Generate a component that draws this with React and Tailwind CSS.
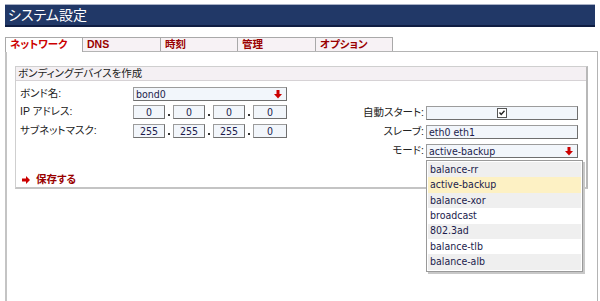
export default function App() {
  const box =
    "h-[14px] border border-[#9c9c9c] border-r-[#6f6f6f] border-b-[#6f6f6f] bg-[#f2f6fb] text-[#1c1c4c] leading-[12px] text-[10.5px] font-['DejaVu_Sans_Condensed','Liberation_Sans',sans-serif]";
  const DownArrow = () => (
    <svg width="8" height="9" viewBox="0 0 8 9" className="shrink-0">
      <rect x="2.5" y="0" width="3" height="4.5" fill="#cc0000" />
      <polygon points="0,4 8,4 4,8.5" fill="#cc0000" />
    </svg>
  );
  const Dot = () => (
    <div className="w-[8px] h-[14px] flex items-end justify-center pb-[3px]">
      <div className="w-[2px] h-[2px] bg-[#333]" />
    </div>
  );
  const opts = [
    ["balance-rr", "bg-[#efefef]"],
    ["active-backup", "bg-[#fdf1c4]"],
    ["balance-xor", "bg-[#efefef]"],
    ["broadcast", "bg-white"],
    ["802.3ad", "bg-[#efefef]"],
    ["balance-tlb", "bg-white"],
    ["balance-alb", "bg-[#efefef]"],
  ];
  return (
    <div className="w-[600px] h-[301px] bg-white overflow-hidden flex flex-col font-['Liberation_Sans','Noto_Sans_CJK_JP',sans-serif] [font-feature-settings:'palt'] text-[10.5px] text-[#222]">
      <div className="mx-[5px] mt-[4px] h-[23px] shrink-0 bg-[#213867] border-t border-t-[#a9b1c6] border-b-2 border-b-[#0f1d42] flex items-center pl-[3px] text-white text-[14px]">
        システム設定
      </div>
      <div className="flex ml-[5px] mt-[10px] h-[15px] shrink-0 font-bold text-[10.5px] leading-[13px]">
        <div className="relative z-10 w-[78px] h-[15px] border border-b-0 border-[#a9a9a9] bg-white text-[#cc0000] pl-[4px]">
          ネットワーク
        </div>
        <div className="w-[78px] h-[14px] border-t border-r border-[#a9a9a9] bg-[#f7f2f5] text-[#990000] pl-[4px]">
          DNS
        </div>
        <div className="w-[77px] h-[14px] border-t border-r border-[#a9a9a9] bg-[#f7f2f5] text-[#990000] pl-[4px]">
          時刻
        </div>
        <div className="w-[78px] h-[14px] border-t border-r border-[#a9a9a9] bg-[#f7f2f5] text-[#990000] pl-[4px]">
          管理
        </div>
        <div className="w-[77px] h-[14px] border-t border-r border-[#a9a9a9] bg-[#f7f2f5] text-[#990000] pl-[4px]">
          オプション
        </div>
      </div>
      <div className="-mt-[1px] ml-[5px] w-[593px] flex-1 border-t border-l-2 border-r border-[#b4b4b4] border-l-[#c4c4c4]">
        <div className="ml-[8px] mr-[9px] mt-[14px] h-[123px] flex flex-col border-t border-l border-[#cfcfcf] border-r-2 border-b-2 border-r-[#b8b8b8] border-b-[#c4c4c4]">
          <div className="h-[14px] shrink-0 bg-[#f4f0f3] border-b border-[#d6d2d5] pl-[2px] leading-[13px] text-[#222]">
            ボンディングデバイスを作成
          </div>
          <div className="flex-1 flex">
            <div className="flex flex-col pl-[4px] pt-[6px]">
              <div className="flex items-center h-[14px]">
                <div className="w-[113px]">ボンド名:</div>
                <div className={box + " w-[154px] flex items-center justify-between pl-[2px] pr-[4px]"}>
                  <span>bond0</span>
                  <DownArrow />
                </div>
              </div>
              <div className="flex items-center h-[14px] mt-[4px]">
                <div className="w-[113px]">IP アドレス:</div>
                <div className={box + " w-[32px] text-center"}>0</div>
                <Dot />
                <div className={box + " w-[32px] text-center"}>0</div>
                <Dot />
                <div className={box + " w-[32px] text-center"}>0</div>
                <Dot />
                <div className={box + " w-[34px] text-center"}>0</div>
              </div>
              <div className="flex items-center h-[14px] mt-[5px]">
                <div className="w-[113px]">サブネットマスク:</div>
                <div className={box + " w-[32px] text-center"}>255</div>
                <Dot />
                <div className={box + " w-[32px] text-center"}>255</div>
                <Dot />
                <div className={box + " w-[32px] text-center"}>255</div>
                <Dot />
                <div className={box + " w-[34px] text-center"}>0</div>
              </div>
              <div className="mt-auto mb-[0px] h-[14px] flex items-center pl-[2px] text-[#990000] font-bold">
                <svg width="8" height="8" viewBox="0 0 8 8" className="mr-[6px]">
                  <rect x="0" y="2.5" width="4.5" height="3" fill="#cc0000" />
                  <polygon points="4,0 8,4 4,8" fill="#cc0000" />
                </svg>
                保存する
              </div>
            </div>
            <div className="ml-auto mr-[8px] flex flex-col pt-[25px]">
              <div className="flex items-center justify-end h-[14px]">
                <div className="mr-[2px]">自動スタート:</div>
                <div className={box + " w-[152px] flex items-center justify-center"}>
                  <svg width="10" height="10" viewBox="0 0 10 10">
                    <rect x="0.5" y="0.5" width="9" height="9" fill="white" stroke="#555" />
                    <path d="M2.5 4.5 L4.2 6.5 L7.5 2.8" fill="none" stroke="#222" strokeWidth="1.4" />
                  </svg>
                </div>
              </div>
              <div className="flex items-center justify-end h-[14px] mt-[5px]">
                <div className="mr-[2px]">スレーブ:</div>
                <div className={box + " w-[152px] pl-[2px]"}>eth0 eth1</div>
              </div>
              <div className="flex items-center justify-end h-[14px] mt-[5px]">
                <div className="mr-[2px]">モード:</div>
                <div className="relative">
                  <div className={box + " w-[152px] flex items-center justify-between pl-[2px] pr-[4px]"}>
                    <span>active-backup</span>
                    <DownArrow />
                  </div>
                  <div className="absolute z-20 left-0 top-[16px] w-[157px] bg-white border border-[#9a9a9a] shadow-[2px_2px_0_#c8c8c8] py-[1px] px-[1px]">
                    {opts.map(([t, c]) => (
                      <div key={t} className={"h-[15.4px] pl-[2px] flex items-center text-[10.5px] font-['DejaVu_Sans_Condensed','Liberation_Sans',sans-serif] text-[#1c1c4c] " + c}>
                        {t}
                      </div>
                    ))}
                  </div>
                </div>
              </div>
            </div>
          </div>
        </div>
      </div>
    </div>
  );
}
